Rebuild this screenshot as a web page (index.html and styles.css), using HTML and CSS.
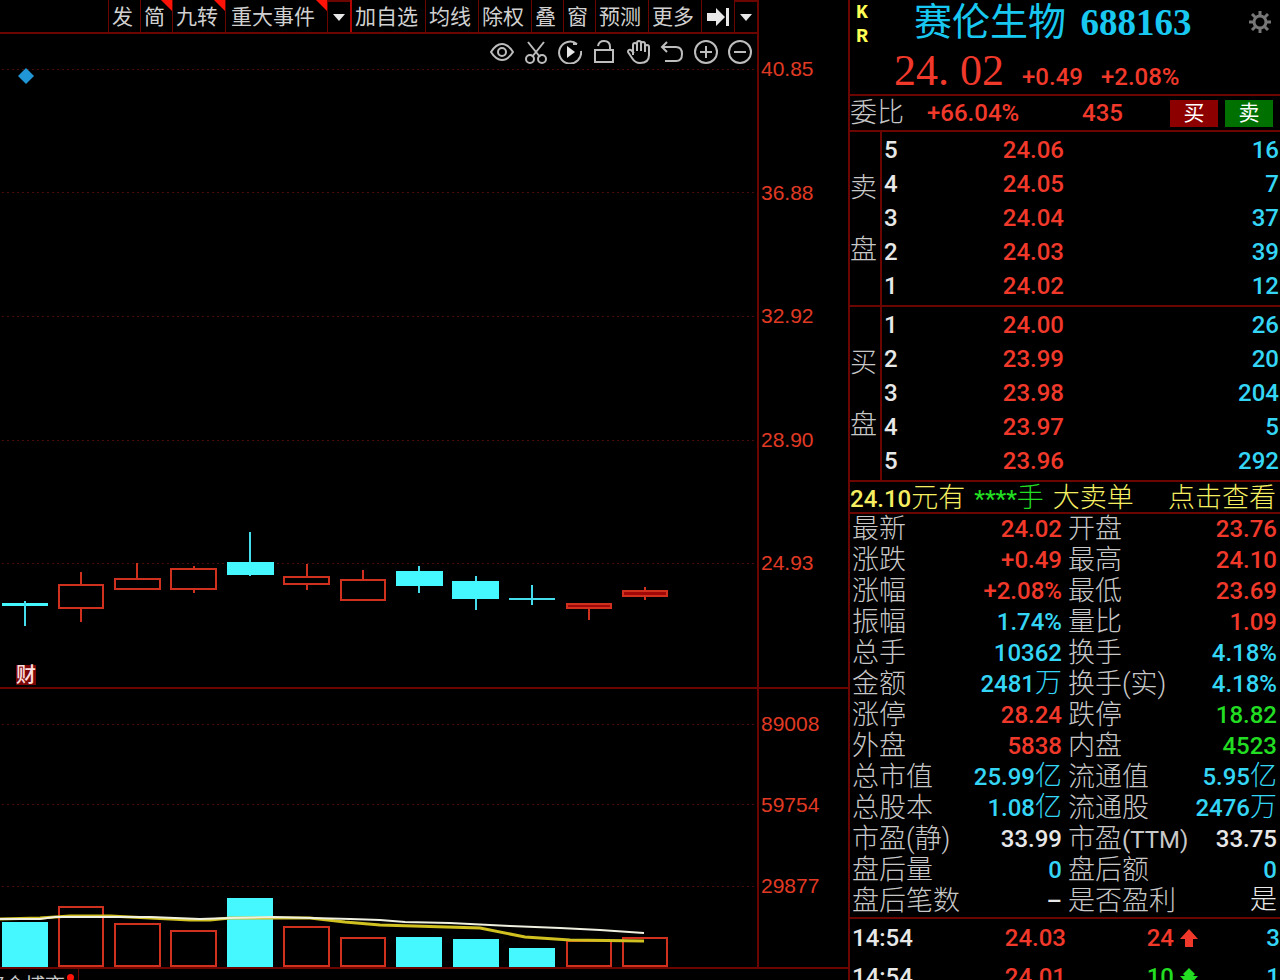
FILE: index.html
```html
<!DOCTYPE html>
<html lang="zh-CN">
<head>
    <meta charset="UTF-8">
    <meta name="viewport" content="width=device-width, initial-scale=1.0">
    <title>赛伦生物 688163</title>
    <link rel="stylesheet" href="styles.css">
</head>
<body>

<main class="charts">
    <nav class="toolbar">
        <button type="button">发</button>
        <button type="button" class="flag">简</button>
        <button type="button" class="flag">九转</button>
        <button type="button" class="flag wide">重大事件</button>
        <button type="button" class="drop" aria-label="事件菜单"><svg width="12" height="7"><path d="M0 0h12L6 7z"/></svg></button>
        <button type="button" class="bright">加自选</button>
        <button type="button">均线</button>
        <button type="button">除权</button>
        <button type="button">叠</button>
        <button type="button">窗</button>
        <button type="button">预测</button>
        <button type="button">更多</button>
        <button type="button" aria-label="下一个"><svg width="22" height="20"><path d="M0 6h9V1l9 9-9 9v-5H0zM19 1h3v18h-3z"/></svg></button>
        <button type="button" class="drop" aria-label="更多菜单"><svg width="12" height="7"><path d="M0 0h12L6 7z"/></svg></button>
    </nav>
    <div class="axis-top"></div>

    <section class="plot price-plot">
        <div class="tools">
            <button type="button" aria-label="显示"><svg viewBox="0 0 24 24"><path d="M1 12Q6 4 12 4t11 8q-5 8-11 8T1 12z"/><circle cx="12" cy="12" r="4"/></svg></button>
            <button type="button" aria-label="剪切"><svg viewBox="0 0 24 24"><path d="M4 2l12 15M20 2L8 17"/><circle cx="6" cy="19" r="4"/><circle cx="18" cy="19" r="4"/></svg></button>
            <button type="button" aria-label="播放"><svg viewBox="0 0 24 24"><path d="M19 4A11 11 0 1 0 23 11M19 4l-4 0"/><path class="solid" d="M9 6l8 6-8 6z"/></svg></button>
            <button type="button" aria-label="解锁"><svg viewBox="0 0 24 24"><path d="M3 10h18v12H3zM6 6q1-5 6-5 6 0 6 6v3"/></svg></button>
            <button type="button" aria-label="拖动"><svg viewBox="0 0 24 24"><path d="M7 15V5q0-2 2-2t2 2V3q0-2 2-2t2 2v1q0-2 2-2t2 2v3q0-2 2-2t2 2v8q0 8-9 8-5 0-8-5l-4-6q0-3 3-2l3 3M11 4v7M15 4v7M19 6v6"/></svg></button>
            <button type="button" aria-label="撤销"><svg viewBox="0 0 24 24"><path d="M7 2L2 7l5 5M2 7h14q6 0 6 7t-6 7H5"/></svg></button>
            <button type="button" aria-label="放大"><svg viewBox="0 0 24 24"><circle cx="12" cy="12" r="11"/><path d="M6 12h12M12 6v12"/></svg></button>
            <button type="button" aria-label="缩小"><svg viewBox="0 0 24 24"><circle cx="12" cy="12" r="11"/><path d="M6 12h12"/></svg></button>
        </div>
        <!-- y = 0 is the lower edge of the toolbar -->
        <svg class="canvas">
            <g class="grid">
                <line x1="2" x2="100%" y1="35" y2="35"/>
                <line x1="2" x2="100%" y1="158" y2="158"/>
                <line x1="2" x2="100%" y1="282" y2="282"/>
                <line x1="2" x2="100%" y1="406" y2="406"/>
                <line x1="2" x2="100%" y1="529" y2="529"/>
            </g>
            <path class="marker" d="M26 34l8 8-8 8-8-8z"/>
            <g class="down">
                <rect x="2" y="569" width="46" height="3"/>
                <path d="M25 567v25"/>
                <path d="M250 498v44"/>
                <rect x="227" y="528" width="47" height="13"/>
                <path d="M419 532v27"/>
                <rect x="396" y="537" width="47" height="15"/>
                <path d="M476 542v34"/>
                <rect x="452" y="547" width="47" height="18"/>
                <path d="M509 565h46M532 551v20"/>
            </g>
            <g class="up">
                <path d="M81 538v13M81 574v14M59 551h44v23H59z"/>
                <path d="M137 529v16M115 545h45v10h-45z"/>
                <path d="M194 532v3M194 556v3M171 535h45v20h-45z"/>
                <path d="M307 530v13M307 550v6M284 543h45v7h-45z"/>
                <path d="M363 536v10M341 546h44v20h-44z"/>
                <path d="M589 574v12"/>
                <path class="thin-body" d="M567 570h44v4h-44z"/>
                <path d="M645 553v4M645 562v4"/>
                <path class="thin-body" d="M623 557h44v5h-44z"/>
            </g>
            <rect class="news" x="16" y="631" width="20" height="20"/>
            <text class="news-text" x="16" y="648">财</text>
        </svg>
    </section>
    <div class="axis price-axis">
        <span>40.85</span>
        <span>36.88</span>
        <span>32.92</span>
        <span>28.90</span>
        <span>24.93</span>
    </div>

    <section class="plot volume-plot">
        <svg class="canvas">
            <g class="grid">
                <line x1="2" x2="100%" y1="35" y2="35"/>
                <line x1="2" x2="100%" y1="115" y2="115"/>
                <line x1="2" x2="100%" y1="197" y2="197"/>
            </g>
            <g class="down">
                <rect x="2" y="233" width="46" height="46"/>
                <rect x="227" y="209" width="46" height="70"/>
                <rect x="396" y="248" width="46" height="31"/>
                <rect x="453" y="250" width="46" height="29"/>
                <rect x="509" y="259" width="46" height="20"/>
            </g>
            <g class="up">
                <rect x="59" y="218" width="44" height="59"/>
                <rect x="115" y="235" width="45" height="42"/>
                <rect x="171" y="242" width="45" height="35"/>
                <rect x="284" y="238" width="45" height="39"/>
                <rect x="341" y="249" width="44" height="28"/>
                <rect x="567" y="252" width="44" height="25"/>
                <rect x="623" y="249" width="44" height="28"/>
            </g>
            <polyline class="ma slow" points="0,230 40,229 70,227 110,227 150,229 190,231 210,231 230,229 310,229 345,233 380,236 480,239 525,248 570,251 644,252"/>
            <polyline class="ma fast" points="0,230 40,230 55,228 150,228 200,230 230,229 274,228 350,230 380,231 405,233 450,234 510,237 560,239 600,241 644,244"/>
        </svg>
    </section>
    <div class="axis volume-axis">
        <span>89008</span>
        <span>59754</span>
        <span>29877</span>
    </div>

    <div class="bottom-tabs">
        <a href="#" class="tab">资金博弈</a>
    </div>
</main>

<aside class="quote">
    <header class="head">
        <div class="marks"><span>K</span><span>R</span></div>
        <h1>赛伦生物 <b>688163</b></h1>
        <button type="button" class="gear" aria-label="设置">
            <svg viewBox="0 0 24 24"><circle cx="12" cy="12" r="6"/><path d="M12 1v5M12 18v5M1 12h5M18 12h5M4 4l4 4M16 16l4 4M20 4l-4 4M8 16l-4 4"/></svg>
        </button>
        <p class="last">
            <strong>24.<span>02</span></strong>
            <span>+0.49</span>
            <span>+2.08%</span>
        </p>
    </header>

    <div class="ratio">
        <span class="name">委比</span>
        <span class="percent">+66.04%</span>
        <span class="diff">435</span>
        <button type="button" class="buy">买</button>
        <button type="button" class="sell">卖</button>
    </div>

    <div class="book">
        <div class="side"><span>卖</span><span>盘</span></div>
        <table>
            <tr><th>5</th><td class="red">24.06</td><td class="cyan">16</td></tr>
            <tr><th>4</th><td class="red">24.05</td><td class="cyan">7</td></tr>
            <tr><th>3</th><td class="red">24.04</td><td class="cyan">37</td></tr>
            <tr><th>2</th><td class="red">24.03</td><td class="cyan">39</td></tr>
            <tr><th>1</th><td class="red">24.02</td><td class="cyan">12</td></tr>
        </table>
    </div>
    <div class="book">
        <div class="side"><span>买</span><span>盘</span></div>
        <table>
            <tr><th>1</th><td class="red">24.00</td><td class="cyan">26</td></tr>
            <tr><th>2</th><td class="red">23.99</td><td class="cyan">20</td></tr>
            <tr><th>3</th><td class="red">23.98</td><td class="cyan">204</td></tr>
            <tr><th>4</th><td class="red">23.97</td><td class="cyan">5</td></tr>
            <tr><th>5</th><td class="red">23.96</td><td class="cyan">292</td></tr>
        </table>
    </div>

    <div class="notice">
        <span><b>24.10</b>元有</span>
        <span class="green"><b>****</b>手</span>
        <span>大卖单</span>
        <a href="#">点击查看</a>
    </div>

    <table class="stats">
        <tr><th>最新</th><td class="red">24.02</td><th>开盘</th><td class="red">23.76</td></tr>
        <tr><th>涨跌</th><td class="red">+0.49</td><th>最高</th><td class="red">24.10</td></tr>
        <tr><th>涨幅</th><td class="red">+2.08%</td><th>最低</th><td class="red">23.69</td></tr>
        <tr><th>振幅</th><td class="cyan">1.74%</td><th>量比</th><td class="red">1.09</td></tr>
        <tr><th>总手</th><td class="cyan">10362</td><th>换手</th><td class="cyan">4.18%</td></tr>
        <tr><th>金额</th><td class="cyan">2481<i>万</i></td><th>换手(实)</th><td class="cyan">4.18%</td></tr>
        <tr><th>涨停</th><td class="red">28.24</td><th>跌停</th><td class="green">18.82</td></tr>
        <tr><th>外盘</th><td class="red">5838</td><th>内盘</th><td class="green">4523</td></tr>
        <tr><th>总市值</th><td class="cyan">25.99<i>亿</i></td><th>流通值</th><td class="cyan">5.95<i>亿</i></td></tr>
        <tr><th>总股本</th><td class="cyan">1.08<i>亿</i></td><th>流通股</th><td class="cyan">2476<i>万</i></td></tr>
        <tr><th>市盈(静)</th><td>33.99</td><th>市盈<small>(TTM)</small></th><td>33.75</td></tr>
        <tr><th>盘后量</th><td class="cyan">0</td><th>盘后额</th><td class="cyan">0</td></tr>
        <tr><th>盘后笔数</th><td>–</td><th>是否盈利</th><td><i>是</i></td></tr>
    </table>

    <table class="ticks">
        <tr>
            <td>14:54</td><td class="red">24.03</td><td class="red">24</td>
            <td class="red"><svg width="18" height="18"><path d="M9 0l9 10h-5v8H5v-8H0z"/></svg></td>
            <td class="cyan">3</td>
        </tr>
        <tr>
            <td>14:54</td><td class="red">24.01</td><td class="green">10</td>
            <td class="green"><svg width="18" height="18"><path d="M9 0l6 6-2 2h5l-9 10L0 8h5L3 6z"/></svg></td>
            <td class="cyan">1</td>
        </tr>
    </table>
</aside>

</body>
</html>
```

FILE: styles.css
```css
* {
    box-sizing: border-box;
}
body {
    margin: 0;
    height: 100vh;
    overflow: hidden;
    display: flex;
    align-items: stretch;
    background-color: #000;
    color: #e8e8e8;
    font-family: Roboto, "Noto Sans CJK SC", sans-serif;
    font-size: 24px;
}
button {
    margin: 0;
    padding: 0;
    border: 0;
    background: none;
    color: inherit;
    font: inherit;
    cursor: pointer;
}
a {
    color: inherit;
    text-decoration: none;
}
table {
    width: 100%;
    border-collapse: collapse;
    table-layout: fixed;
}
th, td {
    padding: 0;
    font-weight: 500;
    text-align: right;
}
i {
    font-style: normal;
    font-size: 27px;
    font-weight: 300;
}
.red { color: #f0392b; }
.cyan { color: #35d6f5; }
.green { color: #22dd22; }

/* charts */
.charts {
    flex: 1;
    min-width: 0;
    display: grid;
    grid-template-columns: 1fr 91px;
    grid-template-rows: 34px 655px 280px auto;
}
.toolbar {
    display: flex;
    justify-content: flex-end;
    overflow: hidden;
    border-bottom: 2px solid #6a0500;
    font-size: 21px;
    color: #d0d0d0;
}
.toolbar button {
    position: relative;
    flex: none;
    padding: 1px 7px 0 3px;
    border-left: 1px solid #6a0500;
    line-height: 32px;
}
.toolbar svg {
    display: block;
    margin: 0 -2px 0 2px;
    fill: #e8e8e8;
}
.toolbar .wide {
    padding-left: 5px;
    padding-right: 12px;
}
.toolbar .drop {
    border-top: 2px solid #6a0500;
}
.toolbar .bright {
    border-left: 2px solid #b00500;
}
.flag::after {
    content: "";
    position: absolute;
    top: 0;
    right: 0;
    border-top: 11px solid #ff1208;
    border-left: 11px solid transparent;
}
.axis-top, .axis {
    border-left: 2px solid #6a0500;
}
.plot {
    position: relative;
    border-bottom: 2px solid #6a0500;
}
.canvas {
    display: block;
    width: 100%;
    height: 100%;
}
.tools {
    position: absolute;
    top: 6px;
    right: 5px;
    display: flex;
    gap: 10px;
}
.tools svg {
    display: block;
    width: 24px;
    height: 24px;
    fill: none;
    stroke: #bdbdbd;
    stroke-width: 2;
}
.tools .solid {
    fill: #e8e8e8;
    stroke: none;
}
.grid line {
    stroke: #4a0c06;
    stroke-width: 1;
    stroke-dasharray: 2 3;
    shape-rendering: crispEdges;
}
.marker {
    fill: #2196d6;
}
.down rect {
    fill: #45f7ff;
}
.down path {
    stroke: #45dcec;
    stroke-width: 2;
}
.up path, .up rect {
    fill: none;
    stroke: #d0301e;
    stroke-width: 2;
}
.up .thin-body {
    fill: #a00808;
}
.news {
    fill: #7c0606;
}
.news-text {
    fill: #ffe0e0;
    font-size: 20px;
    font-weight: 500;
}
.ma {
    fill: none;
    stroke-width: 3;
}
.slow { stroke: #d0c020; }
.fast { stroke: #f0f0e0; stroke-width: 2; }
.axis {
    display: flex;
    flex-direction: column;
    justify-content: space-between;
    padding-left: 2px;
    border-bottom: 2px solid #6a0500;
    color: #e03a24;
    font-family: "Liberation Sans", Arial, sans-serif;
    font-size: 21px;
    line-height: 24px;
}
.price-axis {
    padding-top: 23px;
    padding-bottom: 112px;
}
.volume-axis {
    padding-top: 23px;
    padding-bottom: 69px;
}
.bottom-tabs {
    grid-column: 1 / 3;
    height: 11px;
    overflow: hidden;
}
.tab {
    position: relative;
    display: inline-block;
    margin-left: -15px;
    padding-right: 13px;
    border-right: 1px solid #6a0500;
    font-size: 20px;
    line-height: 34px;
    color: #c8c8c8;
}
.tab::after {
    content: "";
    position: absolute;
    top: 5px;
    right: 4px;
    width: 7px;
    height: 7px;
    border-radius: 50%;
    background-color: #ff1208;
}

/* quote panel */
.quote {
    flex: 0 0 432px;
    border-left: 2px solid #6a0500;
}
.head {
    display: grid;
    grid-template-columns: 24px 1fr 32px;
    grid-template-rows: 48px 46px;
    border-bottom: 2px solid #6a0500;
    height: 96px;
}
.marks {
    display: flex;
    flex-direction: column;
    align-items: center;
    padding-top: 1px;
    color: #ffff55;
    font-family: "Liberation Mono", monospace;
    font-size: 20px;
    font-weight: bold;
    line-height: 24px;
}
h1 {
    margin: 0;
    padding-left: 40px;
    white-space: nowrap;
    color: #18c8f0;
    font-family: "Liberation Serif", "Noto Sans CJK SC", serif;
    font-size: 38px;
    font-weight: 400;
    line-height: 44px;
}
h1 b {
    margin-left: 5px;
    font-size: 37px;
}
.gear svg {
    display: block;
    width: 24px;
    height: 24px;
    margin-bottom: 4px;
    fill: none;
    stroke: #777;
    stroke-width: 3;
}
.last {
    grid-column: 2 / 4;
    display: flex;
    align-items: baseline;
    gap: 18px;
    margin: 0;
    padding-left: 20px;
    line-height: 46px;
    color: #f0392b;
    font-weight: 500;
}
.last strong {
    font-family: "Liberation Serif", serif;
    font-size: 44px;
    font-weight: 400;
}
.last strong span {
    margin-left: 11px;
}
.ratio {
    display: flex;
    align-items: center;
    height: 36px;
    border-bottom: 2px solid #6a0500;
    color: #f0392b;
    font-weight: 500;
}
.ratio .name {
    width: 77px;
    color: #c8c8c8;
    font-size: 27px;
    font-weight: 300;
    line-height: 34px;
}
.ratio .percent {
    flex: 1;
}
.ratio .diff {
    width: 88px;
}
.ratio button {
    width: 48px;
    height: 27px;
    margin-right: 7px;
    color: #fff;
    font-size: 21px;
    font-weight: 400;
    line-height: 27px;
}
.ratio .buy { background-color: #8c0000; }
.ratio .sell { background-color: #007000; }
.book {
    display: flex;
    border-bottom: 2px solid #6a0500;
}
.side {
    flex: 0 0 32px;
    display: flex;
    flex-direction: column;
    justify-content: center;
    gap: 34px;
    border-right: 2px solid #6a0500;
    color: #c8c8c8;
    font-size: 27px;
    font-weight: 300;
    line-height: 28px;
}
.book table {
    margin: 1px 0 2px;
}
.book tr {
    height: 34px;
    line-height: 34px;
}
.book th {
    width: 30px;
    padding-left: 2px;
    text-align: left;
}
.book .red {
    width: 152px;
}
.book .cyan {
    padding-right: 1px;
}
.notice {
    display: flex;
    gap: 9px;
    height: 32px;
    padding-right: 4px;
    border-bottom: 2px solid #6a0500;
    color: #f5ee60;
    font-size: 27px;
    font-weight: 300;
    line-height: 33px;
    white-space: nowrap;
}
.notice b {
    font-size: 24px;
    font-weight: 500;
}
.notice a {
    margin-left: auto;
}
.stats tr {
    height: 31px;
    line-height: 31px;
}
.stats th {
    width: 120px;
    padding-left: 2px;
    color: #c8c8c8;
    font-size: 27px;
    font-weight: 300;
    line-height: 31px;
    text-align: left;
    white-space: nowrap;
}
.stats small {
    font-size: 24px;
    font-weight: 400;
    line-height: 24px;
}
.stats td {
    padding-right: 3px;
}
.stats td + th {
    padding-left: 3px;
}
.stats i {
    line-height: 28px;
}
.ticks {
    border-top: 2px solid #6a0500;
}
.ticks tr {
    height: 39px;
}
.ticks td:first-child {
    width: 90px;
    padding-left: 2px;
    text-align: left;
}
.ticks td:nth-child(2) {
    width: 126px;
}
.ticks td:nth-child(3) {
    width: 108px;
}
.ticks td:nth-child(4) {
    width: 24px;
}
.ticks svg {
    display: block;
    margin-left: auto;
    fill: currentColor;
}
```
